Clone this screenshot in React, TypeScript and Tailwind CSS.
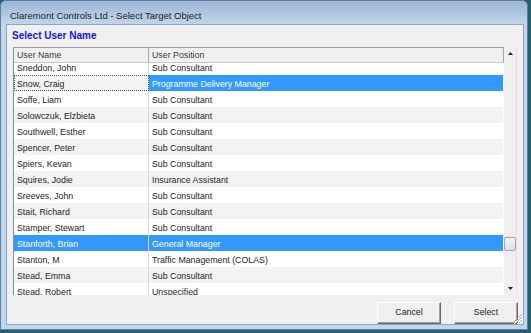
import React from 'react';

type Row = { name: string; position: string; sel?: 'cell' | 'row' };

const rows: Row[] = [
    { name: 'Sneddon, John', position: 'Sub Consultant' },
    { name: 'Snow, Craig', position: 'Programme Delivery Manager', sel: 'cell' },
    { name: 'Soffe, Liam', position: 'Sub Consultant' },
    { name: 'Solowczuk, Elzbieta', position: 'Sub Consultant' },
    { name: 'Southwell, Esther', position: 'Sub Consultant' },
    { name: 'Spencer, Peter', position: 'Sub Consultant' },
    { name: 'Spiers, Kevan', position: 'Sub Consultant' },
    { name: 'Squires, Jodie', position: 'Insurance Assistant' },
    { name: 'Sreeves, John', position: 'Sub Consultant' },
    { name: 'Stait, Richard', position: 'Sub Consultant' },
    { name: 'Stamper, Stewart', position: 'Sub Consultant' },
    { name: 'Stanforth, Brian', position: 'General Manager', sel: 'row' },
    { name: 'Stanton, M', position: 'Traffic Management (COLAS)' },
    { name: 'Stead, Emma', position: 'Sub Consultant' },
    { name: 'Stead, Robert', position: 'Unspecified' },
];

const font = { fontFamily: '"Liberation Sans", Arial, sans-serif' };

function GridRow({ row, index }: { row: Row; index: number }) {
    const shade = index % 2 === 1 ? 'bg-[#f3f3f3]' : 'bg-white';
    const rowSel = row.sel === 'row';
    const cellSel = row.sel === 'cell';
    return (
        <div className="flex h-[16px] text-[8.8px] leading-[16px]">
            <div
                className={`w-[135px] shrink-0 border-r border-[#dadada] pl-[3px] pt-[1px] whitespace-nowrap overflow-hidden ${
                    rowSel ? 'bg-[#3399ff] text-white' : `${shade} text-[#1e1e1e]`
                } ${cellSel ? 'outline outline-1 outline-dotted outline-[#555] -outline-offset-1' : ''}`}
            >
                {row.name}
            </div>
            <div
                className={`flex-1 pl-[3px] pt-[1px] whitespace-nowrap overflow-hidden ${
                    rowSel || cellSel ? 'bg-[#3399ff] text-white' : `${shade} text-[#1e1e1e]`
                }`}
            >
                {row.position}
            </div>
        </div>
    );
}

function Button({ label }: { label: string }) {
    return (
        <div className="w-[64px] h-[22px] flex items-center justify-center bg-[#efefef] border border-t-white border-l-white border-r-[#696969] border-b-[#696969] shadow-[inset_-1px_-1px_0_#a0a0a0] text-[8.8px] text-[#222]">
            {label}
        </div>
    );
}

export default function App() {
    return (
        <div className="w-[531px] h-[333px] bg-[#245f6d]" style={font}>
            <div className="w-[528px] h-[330px] flex flex-col rounded-t-[6px] border border-[#5f7f9f] bg-[#c3d7ec]">
                {/* title bar */}
                <div className="h-[23px] shrink-0 rounded-t-[5px] bg-gradient-to-b from-[#9db6d4] to-[#c0d5eb] pl-[9px] pt-[9px] text-[9.5px] leading-[11px] text-[#1e1e1e]">
                    Claremont Controls Ltd - Select Target Object
                </div>

                <div className="flex-1 flex pl-[5px] pr-[3px] pb-[4px]">
                    <div className="relative flex-1 flex flex-col border border-[#91a7c1] bg-[#f0f0f0]">
                        <div className="mt-[4px] ml-[5px] h-[13px] text-[10px] leading-[13px] font-bold text-[#1010ff]">
                            Select User Name
                        </div>

                        {/* grid */}
                        <div className="mt-[5px] ml-[6px] w-[504px] h-[248px] flex border-l border-[#8a8f96]">
                            <div className="flex-1 flex flex-col">
                                <div className="h-[16px] shrink-0 flex border-t border-b border-t-[#9a9a9a] border-b-[#c8c8c8] bg-[#f0f0f0] text-[8.8px] leading-[16px] text-[#3a3a3a]">
                                    <div className="w-[135px] shrink-0 border-r border-[#a8a8a8] pl-[3px] leading-[13px] pt-[1px]">User Name</div>
                                    <div className="flex-1 border-r border-[#a8a8a8] pl-[3px] leading-[13px] pt-[1px]">User Position</div>
                                </div>
                                <div className="flex-1 overflow-hidden bg-white pr-[1px]">
                                    <div className="-mt-[4px]">
                                        {rows.map((r, i) => (
                                            <GridRow key={r.name} row={r} index={i} />
                                        ))}
                                    </div>
                                </div>
                            </div>

                            {/* scrollbar */}
                            <div className="w-[13px] shrink-0 flex flex-col bg-[#efefef] border-r border-[#e2e2e2]">
                                <div className="h-[13px] flex items-center justify-center">
                                    <svg width="5" height="3" viewBox="0 0 5 3">
                                        <path d="M2.5 0 L5 3 L0 3 Z" fill="#222" />
                                    </svg>
                                </div>
                                <div className="flex-1">
                                    <div className="mt-[177px] w-[12px] h-[14px] rounded-[2px] border border-[#a3a3a3] bg-gradient-to-b from-[#f4f4f4] to-[#dedede]" />
                                </div>
                                <div className="h-[13px] flex items-center justify-center">
                                    <svg width="5" height="3" viewBox="0 0 5 3">
                                        <path d="M0 0 L5 0 L2.5 3 Z" fill="#222" />
                                    </svg>
                                </div>
                            </div>
                        </div>

                        {/* buttons */}
                        <div className="mt-[7px] mr-[5px] flex justify-end gap-[13px]">
                            <Button label="Cancel" />
                            <Button label="Select" />
                        </div>

                        {/* size grip */}
                        <svg className="absolute right-0 bottom-0" width="12" height="12" viewBox="0 0 12 12">
                            <path d="M11 2 L2 11 M11 5 L5 11 M11 8 L8 11" stroke="#a8a8a8" strokeWidth="1" />
                            <path d="M12 3 L3 12 M12 6 L6 12 M12 9 L9 12" stroke="#ffffff" strokeWidth="1" />
                        </svg>
                    </div>
                </div>
            </div>
        </div>
    );
}
